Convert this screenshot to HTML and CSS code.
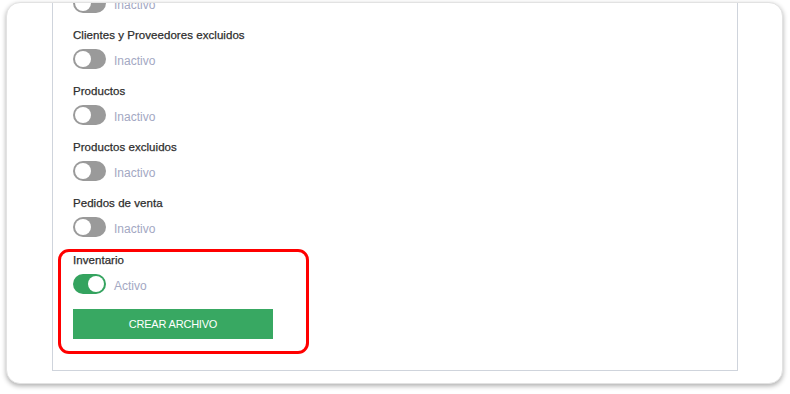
FILE: index.html
```html
<!DOCTYPE html>
<html lang="es">
<head>
<meta charset="utf-8">
<title>Exportar</title>
<link rel="stylesheet" href="styles.css">
</head>
<body>
<div class="card">
  <div class="panel">
    <div class="list">
      <div class="row">
        <div class="label">Clientes y Proveedores</div>
        <div class="switch-line"><span class="switch"></span><span class="state">Inactivo</span></div>
      </div>
      <div class="row">
        <div class="label">Clientes y Proveedores excluidos</div>
        <div class="switch-line"><span class="switch"></span><span class="state">Inactivo</span></div>
      </div>
      <div class="row">
        <div class="label">Productos</div>
        <div class="switch-line"><span class="switch"></span><span class="state">Inactivo</span></div>
      </div>
      <div class="row">
        <div class="label">Productos excluidos</div>
        <div class="switch-line"><span class="switch"></span><span class="state">Inactivo</span></div>
      </div>
      <div class="row">
        <div class="label">Pedidos de venta</div>
        <div class="switch-line"><span class="switch"></span><span class="state">Inactivo</span></div>
      </div>
      <div class="highlight">
        <div class="row">
          <div class="label">Inventario</div>
          <div class="switch-line"><span class="switch on"></span><span class="state">Activo</span></div>
        </div>
        <button class="btn" type="button">CREAR ARCHIVO</button>
      </div>
    </div>
  </div>
</div>
</body>
</html>
```
FILE: styles.css
```css
* { box-sizing: border-box; }
html, body { margin: 0; padding: 0; background: #ffffff; }
body {
  width: 790px;
  height: 394px;
  overflow: hidden;
  font-family: "Liberation Sans", Arial, sans-serif;
}
.card {
  margin: 2px 0 0 6px;
  width: 777px;
  height: 382px;
  background: #ffffff;
  border: 1px solid #e2e2e2;
  border-radius: 14px;
  box-shadow: 0 2px 5px rgba(0, 0, 0, 0.32);
  overflow: hidden;
}
.panel {
  margin-left: 45px;
  margin-top: -3px;
  width: 686px;
  height: 371px;
  border: 1px solid #cfd4dc;
  border-top: none;
  overflow: hidden;
}
.list {
  display: flex;
  flex-direction: column;
  gap: 14px;
  margin-top: -29px;
  padding-left: 20px;
}
.row {
  display: flex;
  flex-direction: column;
  gap: 6px;
}
.label {
  height: 16px;
  line-height: 16px;
  font-size: 11.5px;
  color: #2e2e2e;
  -webkit-text-stroke: 0.25px #2e2e2e;
  letter-spacing: 0.05px;
}
.switch-line {
  display: flex;
  align-items: center;
  gap: 8px;
  height: 20px;
}
.switch {
  position: relative;
  width: 33px;
  height: 20px;
  border-radius: 10px;
  background: #9a9a9a;
  flex: none;
}
.switch::after {
  content: "";
  position: absolute;
  top: 2px;
  left: 2px;
  width: 16px;
  height: 16px;
  border-radius: 50%;
  background: #ffffff;
}
.switch.on { background: #34a35f; }
.switch.on::after { left: 15px; }
.state {
  font-size: 12px;
  color: #a3a8c3;
  line-height: 20px;
  padding-top: 3px;
}
.highlight {
  align-self: flex-start;
  width: 251px;
  margin: -2px 0 0 -15px;
  padding: 0 33px 12px 12px;
  border: 3px solid #ff0000;
  border-radius: 11px;
  display: flex;
  flex-direction: column;
  gap: 15px;
}
.btn {
  width: 200px;
  height: 30px;
  border: none;
  background: #38a862;
  color: #ffffff;
  font-family: "Liberation Sans", Arial, sans-serif;
  font-size: 11px;
  letter-spacing: -0.2px;
  padding: 0;
  cursor: pointer;
}
```
